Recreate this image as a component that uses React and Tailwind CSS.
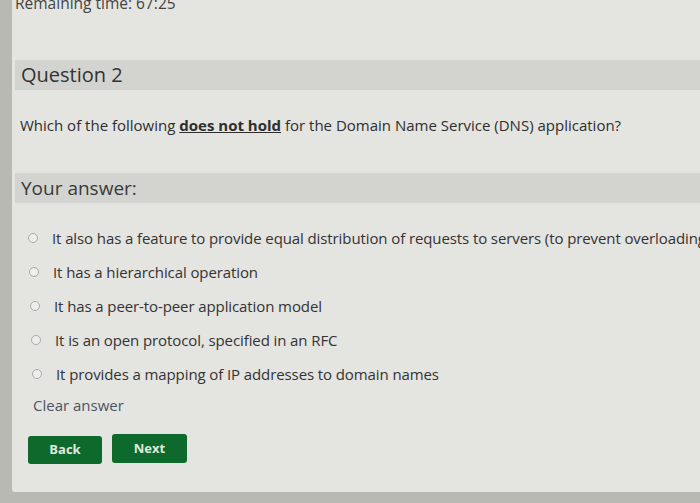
import React from "react";

const options = [
  "It also has a feature to provide equal distribution of requests to servers (to prevent overloading)",
  "It has a hierarchical operation",
  "It has a peer-to-peer application model",
  "It is an open protocol, specified in an RFC",
  "It provides a mapping of IP addresses to domain names",
];

export default function App() {
  return (
    <div
      className="w-[700px] h-[503px] overflow-hidden bg-[#b9b9b4] flex flex-col"
      style={{ fontFamily: '"Open Sans", sans-serif' }}
    >
      {/* Card */}
      <div className="ml-[12px] h-[492px] bg-[#e4e4e1] flex flex-col overflow-hidden rounded-bl-[3px]">
        <div className="h-[6px] relative">
          <div className="absolute left-[3px] top-[-7px] text-[15.5px] leading-[20px] text-[#444] whitespace-nowrap">
            Remaining time: 67:25
          </div>
        </div>

        {/* Question header */}
        <div className="mt-[54px] ml-[3px] h-[30px] bg-[#d3d3d0] flex items-center pl-[6px]">
          <span className="text-[20px] text-[#333] leading-none">Question 2</span>
        </div>

        <p className="mt-[24px] ml-[8px] text-[15px] leading-[22px] text-[#2e2e2e] whitespace-nowrap">
          Which of the following{" "}
          <span className="font-bold underline">does not hold</span> for the
          Domain Name Service (DNS) application?
        </p>

        {/* Answer header */}
        <div className="mt-[37px] ml-[3px] h-[30px] bg-[#d3d3d0] flex items-center pl-[6px]">
          <span className="text-[19px] text-[#3a3a3a] leading-none">Your answer:</span>
        </div>

        <div className="mt-[24px] flex flex-col gap-[12px] pl-[16px]">
          {options.map((o, i) => (
            <label
              key={i}
              className="flex items-center h-[22px] whitespace-nowrap"
              style={{ paddingLeft: i }}
            >
              <span className="w-[10px] h-[10px] rounded-full border border-[#a9a9a6] bg-[#eeeeec] shrink-0" />
              <span className="ml-[14px] text-[15px] tracking-[-0.1px] text-[#333]">{o}</span>
            </label>
          ))}
        </div>

        <div className="mt-[10px] ml-[21px] text-[15px] leading-[20px] text-[#4b5563]">
          Clear answer
        </div>

        <div className="mt-[21px] ml-[16px] flex gap-[10px] items-start">
          <button className="w-[74px] h-[28px] rounded-[3px] bg-[#0e6a2c] text-[#dfe9df] text-[13px] font-bold">
            Back
          </button>
          <button className="w-[75px] h-[29px] rounded-[3px] bg-[#0e6a2c] text-[#dfe9df] text-[13px] font-bold -mt-[2px]">
            Next
          </button>
        </div>
      </div>
    </div>
  );
}
